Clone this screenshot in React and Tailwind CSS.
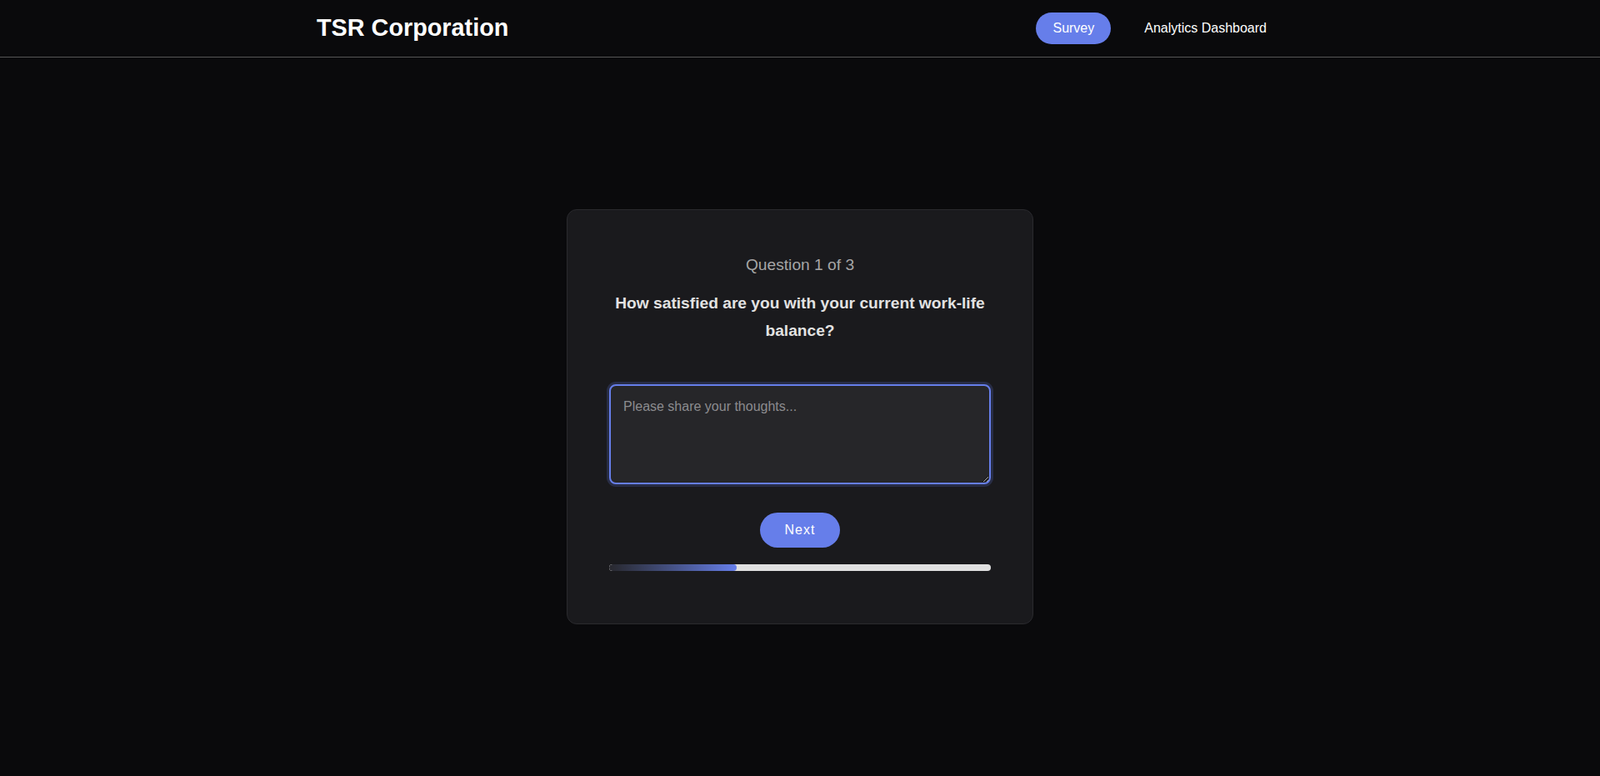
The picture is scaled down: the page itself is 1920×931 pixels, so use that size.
import React, { useState } from "react";

const App = () => {
  const [answer, setAnswer] = useState("");
  const [current] = useState(1);
  const total = 3;

  return (
    <div className="min-h-screen flex flex-col bg-[#0a0a0c] font-['Liberation_Sans',Arial,sans-serif] text-white">
      {/* Header */}
      <header className="h-[69px] border-b border-[#555]">
        <div className="max-w-[1200px] h-full mx-auto px-5 flex items-center justify-between">
          <h1 className="text-[28.8px] font-bold text-white">TSR Corporation</h1>
          <nav className="flex items-center gap-5">
            <button className="rounded-full bg-[#667eea] px-5 py-2.5 text-base leading-[18px] text-white">
              Survey
            </button>
            <button className="rounded-full px-5 py-2.5 text-base leading-[18px] text-white">
              Analytics Dashboard
            </button>
          </nav>
        </div>
      </header>

      {/* Survey card */}
      <main className="flex-1 flex items-center justify-center">
        <div className="w-[560px] rounded-xl border border-[#2a2a2e] bg-[#1a1a1d] px-[50px] pt-[51px] pb-[50px] text-center">
          <p className="text-[19.2px] leading-[1.6] text-[#a6a6a6]">
            Question {current} of {total}
          </p>
          <h2 className="mt-[15px] text-[19.2px] font-bold leading-[32.4px] text-[#e2e2e2]">
            How satisfied are you with your current work-life balance?
          </h2>
          <textarea
            autoFocus
            value={answer}
            onChange={(e) => setAnswer(e.target.value)}
            placeholder="Please share your thoughts..."
            className="mt-12 block w-full h-[120px] pt-[13px] px-[15px] pb-[15px] border-2 border-[#667eea] rounded-lg bg-[#262629] text-base leading-normal text-[#ddd] placeholder:text-[#8c8c8f] outline-none ring-[3px] ring-[#667eea]/20 font-['Liberation_Sans',Arial,sans-serif]"
          />
          <div className="mt-[34px] flex justify-center">
            <button className="rounded-full bg-[#667eea] px-[30px] py-3 text-base leading-[18px] tracking-[1px] text-white">
              Next
            </button>
          </div>
          <div className="mt-5 mb-[13px] h-2 w-full rounded-full bg-[#e0e0e0] overflow-hidden">
            <div className="h-full w-1/3 rounded-full bg-linear-to-r from-[#28282e] to-[#667eea]" />
          </div>
        </div>
      </main>
    </div>
  );
};

export default App;
